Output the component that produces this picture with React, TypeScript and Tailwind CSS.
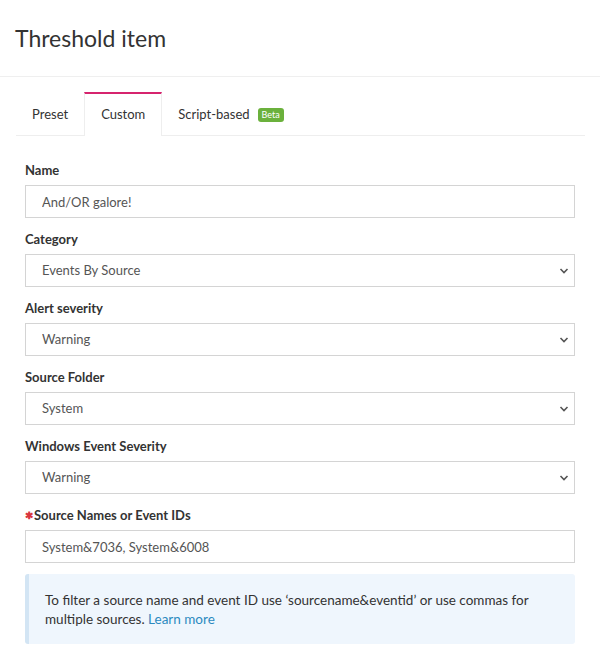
import React from "react";

const Chevron = () => (
  <svg
    className="pointer-events-none absolute right-[6px] top-1/2 -translate-y-1/2"
    width="10"
    height="7"
    viewBox="0 0 10 7"
    fill="none"
  >
    <path d="M1.5 1.5L5 5L8.5 1.5" stroke="#555" strokeWidth="1.6" />
  </svg>
);

interface FieldProps {
  label: string;
  required?: boolean;
  children: React.ReactNode;
}

const Field: React.FC<FieldProps> = ({ label, required, children }) => (
  <div className="mb-[12px]">
    <label className="mb-[5px] flex items-center text-[13px] font-bold leading-[19px] text-[#333]">
      {required && <span className="mr-[1px] text-[10px] text-[#d9363e]">✱</span>}
      {label}
    </label>
    {children}
  </div>
);

const Select = ({ value }: { value: string }) => (
  <div className="relative">
    <select
      defaultValue={value}
      className="h-[33px] w-full appearance-none rounded-none border border-[#d4d4d4] bg-white pl-[16px] text-[13px] text-[#555] outline-none"
    >
      <option>{value}</option>
    </select>
    <Chevron />
  </div>
);

const Input = ({ value }: { value: string }) => (
  <input
    defaultValue={value}
    className="block h-[33px] w-full border border-[#d4d4d4] bg-white pl-[16px] text-[13px] text-[#555] outline-none"
  />
);

export default function App() {
  return (
    <div className="h-[656px] w-[600px] overflow-hidden bg-white font-['Lato',sans-serif] text-[#333]">
      <div className="flex h-[77px] items-center border-b border-[#efefef] px-[15px]">
        <h1 className="text-[23px] font-normal text-[#333]">Threshold item</h1>
      </div>

      <div className="px-[16px] pt-[15px]">
        {/* tabs */}
        <div className="mr-[-1px] flex h-[44px] border-b border-[#eee] text-[13px] text-[#333]">
          <div className="flex items-center px-[16px] pt-[2px]">Preset</div>
          <div className="-mb-px flex items-center border-x border-t-2 border-[#eee] border-t-[#d6246e] bg-white px-[16px]">
            Custom
          </div>
          <div className="flex items-center px-[16px] pt-[2px]">
            Script-based
            <span className="ml-[8px] rounded-[3px] bg-[#6bb13c] px-[4px] text-[9px] leading-[14px] text-white">
              Beta
            </span>
          </div>
        </div>

        {/* form */}
        <div className="px-[9px] pt-[25px]">
          <Field label="Name">
            <Input value="And/OR galore!" />
          </Field>
          <Field label="Category">
            <Select value="Events By Source" />
          </Field>
          <Field label="Alert severity">
            <Select value="Warning" />
          </Field>
          <Field label="Source Folder">
            <Select value="System" />
          </Field>
          <Field label="Windows Event Severity">
            <Select value="Warning" />
          </Field>
          <Field label="Source Names or Event IDs" required>
            <Input value="System&7036, System&6008" />
          </Field>

          <div className="-mt-px rounded-[3px] border-l-4 border-[#d3e5f4] bg-[#eff6fd] pb-[15px] pl-[16px] pr-[20px] pt-[17px] text-[13.5px] leading-[19px] text-[#333]">
            <p>
              To filter a source name and event ID use ‘sourcename&amp;eventid’ or use commas for
              multiple sources. <span className="text-[#2b8ac0]">Learn more</span>
            </p>
          </div>
        </div>
      </div>
    </div>
  );
}
